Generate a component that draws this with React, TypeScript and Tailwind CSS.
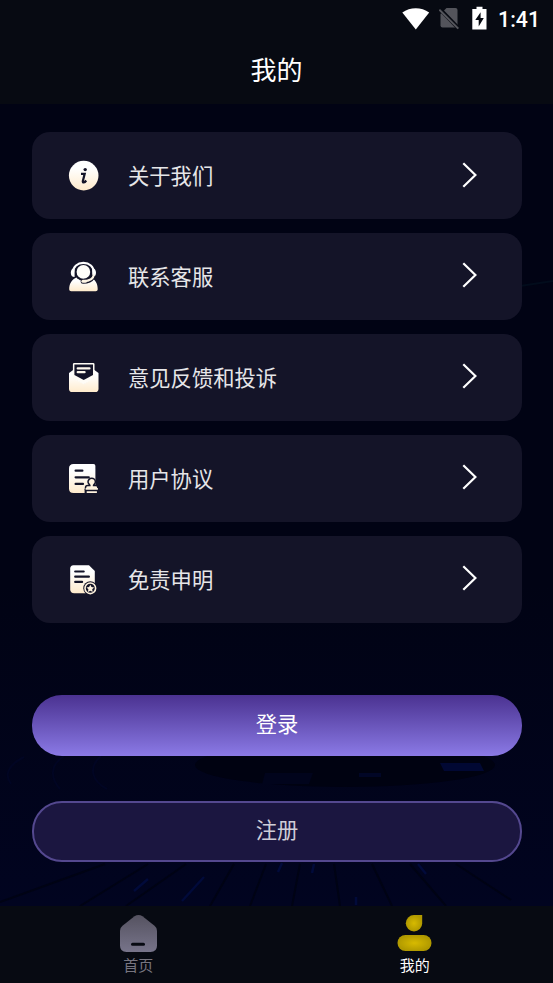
import type { ReactNode } from "react";

function InfoIcon() {
  return (
    <>
      <circle cx="14.7" cy="14.6" r="14.8" fill="url(#cream)" />
      <circle cx="16.2" cy="8.6" r="1.7" fill="#141428" />
      <path
        d="M12 12.9h3.700l-1.900 7.300c-.3 1.900 1.800 1.600 3.400-.7"
        fill="none"
        stroke="#141428"
        strokeWidth="2.2"
      />
    </>
  );
}

function ServiceIcon() {
  return (
    <>
      <path
        d="M.2 27.300C.1 21.600 3 17.500 7.600 15.600h14c4.600 1.900 7.200 6 7.100 11.700 0 1.300-.8 1.900-2 1.900H2.200c-1.200 0-2-.6-2-1.900z"
        fill="url(#cream)"
      />
      <circle cx="14.4" cy="10" r="8.8" fill="#141428" />
      <path d="M4 10.500C4 4.500 8.500.9 14.400.9s10.400 3.600 10.400 9.600" fill="none" stroke="#fff" strokeWidth="2.1" />
      <path
        d="M5.600 6.200v8.900c-2.500 0-3.800-1.900-3.800-4.400s1.300-4.500 3.800-4.500zM23.200 6.200v8.900c2.500 0 3.800-1.900 3.800-4.400s-1.300-4.500-3.800-4.500z"
        fill="#fff"
      />
      <circle cx="14.4" cy="9.9" r="6.8" fill="#fffefa" />
      <path
        d="M23.500 15.200c-1.700 3-4.300 4.200-9.500 4.200"
        fill="none"
        stroke="#141428"
        strokeWidth="4.8"
        strokeLinecap="round"
      />
      <path d="M24.900 12.500c-.6 4.700-4.200 6.600-10.300 6.700" fill="none" stroke="#fff6e6" strokeWidth="2.1" />
      <rect x="12.400" y="17.800" width="5.600" height="3" rx="1.500" fill="#fff6e6" />
    </>
  );
}

function FeedbackIcon() {
  return (
    <>
      <path
        d="M0 10 4.500 6.700V15l10.200 5.500L25 15V6.700l4.500 3.300V26c0 2-1.200 3.100-3.200 3.100H3.200C1.200 29.100 0 28 0 26z"
        fill="url(#cream)"
      />
      <path d="M3.900 6.500V1.300Q3.900 0 5.200 0h19q1.300 0 1.300 1.300v14.200l-10.800 5.700-10.800-5.700z" fill="#fffcf6" />
      <path d="M5.400 1.600h18.600v10.300l-9.300 5.100-9.300-5.100z" fill="#141428" />
      <path d="M8.700 5.400h11.800M8.700 9.200h6.900" stroke="#fff9ee" strokeWidth="2.2" strokeLinecap="round" />
    </>
  );
}

function AgreementIcon() {
  return (
    <>
      <path
        d="M4.500 0h20q1.900 0 1.900 1.900V24.500q0 4.500-4.500 4.500H4.500Q0 29 0 24.500v-20Q0 0 4.500 0z"
        fill="url(#cream)"
      />
      <path
        d="M6.600 6.700h6.800M6.600 13.300H19.800M6.600 19.900H14"
        stroke="#141428"
        strokeWidth="2.2"
        strokeLinecap="round"
      />
      <path
        d="M20.900 21.600c.1-1-1.900-1.800-1.900-3.600a3.700 3.700 0 0 1 7.400 0c0 1.800-2 2.600-1.900 3.600h2.200c1.400 0 2.200.8 2.200 2.200V25.500H16.500v-1.700c0-1.400.8-2.200 2.200-2.200z"
        fill="#fff3de"
        stroke="#141428"
        strokeWidth="1.500"
      />
      <path d="M15.600 25h13.900V30H15.600z" fill="#141428" />
      <path d="M16.600 24h12.300v1.700H16.600zM17.700 27.300h10.200v1.800H17.700z" fill="#fff3de" />
    </>
  );
}

function DisclaimerIcon() {
  return (
    <>
      <path
        d="M4.400.2H20l5.800 5.800v18.200c0 2.500-1.500 4-4 4H5.200c-2.500 0-4-1.500-4-4V3.600C1.200 1.500 2.300.2 4.400.2z"
        fill="url(#cream)"
      />
      <path
        d="M6.200 6.500h8.500M6.200 11.700h13.700M6.200 16.900h6.900"
        stroke="#141428"
        strokeWidth="2.2"
        strokeLinecap="round"
      />
      <circle cx="21.300" cy="23.300" r="7" fill="#141428" />
      <circle cx="21.300" cy="23.300" r="5.300" fill="#141428" stroke="#fff3de" strokeWidth="1.600" />
      <path
        d="m21.300 19.700 1.200 2.400 2.600.4-1.900 1.800.5 2.600-2.400-1.200-2.400 1.200.5-2.600-1.900-1.800 2.600-.4z"
        fill="#fff3de"
      />
    </>
  );
}

const menu: { label: string; icon: ReactNode }[] = [
  { label: "关于我们", icon: <InfoIcon /> },
  { label: "联系客服", icon: <ServiceIcon /> },
  { label: "意见反馈和投诉", icon: <FeedbackIcon /> },
  { label: "用户协议", icon: <AgreementIcon /> },
  { label: "免责申明", icon: <DisclaimerIcon /> },
];

function StatusBar() {
  return (
    <div className="flex h-[38px] items-center justify-end pr-[13px]">
      <svg width="28" height="22" viewBox="0 0 28 22" className="mr-[9px] mb-px">
        <path d="M.3 4.600C8-1.200 19.500-1.200 27.200 4.600L13.800 21.400z" fill="#fff" />
      </svg>
      <svg width="21" height="22" viewBox="0 0 21 22" className="mr-[12px]">
        <path d="M7.500 0h9q2 0 2 2v15.500q0 2-2 2h-13q-2 0-2-2V6z" fill="#53545b" />
        <path d="m0 .2 20 20.600" stroke="#070a12" strokeWidth="4" />
        <path d="m.3 1.600 19 19" stroke="#55565c" strokeWidth="2" />
      </svg>
      <svg width="15" height="24" viewBox="0 0 15 24" className="mr-[11px] mb-[2px]">
        <path d="M4.500.8h6v2.300h4V23.500H.3V3.100h4.200z" fill="#fff" />
        <path d="M8.600 6.300 3.300 14h3.400v6.500l5.100-8.400H8.600z" fill="#070a12" />
      </svg>
      <span className="mt-px font-['Roboto','Liberation_Sans',sans-serif] text-[21.3px] leading-none font-medium text-white">
        1:41
      </span>
    </div>
  );
}

function Backdrop() {
  return (
    <svg className="absolute inset-0" width="553" height="802" viewBox="0 104 553 802" fill="none">
      <path d="m520 286 33-5" stroke="#020c1c" strokeWidth="2" />
      <ellipse cx="345" cy="765" rx="150" ry="22" fill="#000211" />
      <path d="m440 763 40 0 4 8-40 0z" fill="#010833" />
      <path d="M359 773h22v4h-22z" fill="#010626" />
      <path d="m265 773h48l-4 11-47 0z" fill="#01041c" />
      <path
        d="M24 757c-16 8-20 18-13 27M64 756c-14 9-14 22-4 33M101 756c-14 12-8 26 6 33"
        stroke="#010523"
        strokeWidth="2"
      />
      <path
        d="m105 864-105 38m148-38-68 42m106-42-60 42m108-42-24 42m56-42-16 42m50-42-8 42m42-42 6 42m32-42 20 42m18-42 36 42m10-42 55 36"
        stroke="#000314"
        strokeWidth="2"
      />
      <path
        d="m148 879-14 12m70-14-22 24m100-38-4 9m36-8-2 9m106-9 8 10M356 897v8"
        stroke="#010a3a"
        strokeWidth="2.500"
      />
    </svg>
  );
}

export default function App() {
  return (
    <div className="flex h-[983px] w-[553px] flex-col overflow-hidden bg-[#070a12] font-['Roboto','Noto_Sans_CJK_SC',sans-serif] text-white">
      <svg width="0" height="0" className="absolute">
        <defs>
          <linearGradient id="cream" x1="0" y1="0" x2="0" y2="1">
            <stop offset="0.25" stopColor="#ffffff" />
            <stop offset="1" stopColor="#ffebcc" />
          </linearGradient>
        </defs>
      </svg>

      <header className="h-[104px] shrink-0">
        <StatusBar />
        <h1 className="pt-px text-center text-[26px] leading-[64px]">我的</h1>
      </header>

      <main className="relative h-[802px] shrink-0 bg-linear-to-b from-[#010314] from-60% to-[#010420]">
        <Backdrop />
        <div className="relative flex flex-col pt-7 pr-[31px] pl-8">
          <div className="flex flex-col gap-[13.9px]">
            {menu.map((item) => (
              <button
                key={item.label}
                className="flex h-[87px] items-center rounded-[18px] bg-[#141428] pr-[45px] pl-[37px]"
              >
                <svg width="30" height="30" viewBox="0 0 30 30" className="mt-px overflow-visible">
                  {item.icon}
                </svg>
                <span className="mt-[3px] ml-[29px] text-[21.3px] leading-8 text-[#e6e6e8]">{item.label}</span>
                <svg width="15" height="26" viewBox="0 0 15 26" fill="none" className="mb-[2px] ml-auto">
                  <path d="M1.300 1.200 13.400 13 1.300 24.800" stroke="#fff" strokeWidth="2.200" />
                </svg>
              </button>
            ))}
          </div>
          <button className="mt-[72.4px] h-[61px] rounded-[30px] bg-linear-to-b from-[#4b3291] to-[#8b7ae6] pb-px text-[21.3px]">
            登录
          </button>
          <button className="mt-[45px] h-[61px] rounded-[30px] border-2 border-[#54488f] bg-[#1b1640] pb-px text-[21.3px] text-[#cfcdd8]">
            注册
          </button>
        </div>
      </main>

      <nav className="grid h-[77px] shrink-0 grid-cols-2">
        <div className="flex flex-col items-center pt-[9px]">
          <svg width="38" height="38" viewBox="0 0 38 38">
            <defs>
              <linearGradient id="home" x1="0" y1="0" x2="0" y2="1">
                <stop stopColor="#555260" />
                <stop offset="1" stopColor="#77748a" />
              </linearGradient>
            </defs>
            <path
              d="M15.500 1.200q4-2.400 8 0l12 9.500q2.500 2 2.500 5V30.500q0 6.500-6.500 6.500h-24Q1 37 1 30.500V15.700q0-3 2.500-5z"
              fill="url(#home)"
            />
            <path d="M13.500 29.300h11" stroke="#070a12" strokeWidth="3" strokeLinecap="round" />
          </svg>
          <span className="mt-[2px] text-[15px] leading-[22px] text-[#77757f]">首页</span>
        </div>
        <div className="flex flex-col items-center pt-[9px]">
          <svg width="35" height="38" viewBox="0 0 35 38">
            <defs>
              <radialGradient id="gold">
                <stop stopColor="#d7ba00" />
                <stop offset="1" stopColor="#b09900" />
              </radialGradient>
            </defs>
            <path d="M17 0h8.200v8.200a8.200 8.200 0 1 1-8.200-8.200z" fill="url(#gold)" />
            <rect x=".5" y="20" width="34" height="16" rx="8" fill="url(#gold)" />
          </svg>
          <span className="mt-[2px] text-[15px] leading-[22px] text-white">我的</span>
        </div>
      </nav>
    </div>
  );
}
